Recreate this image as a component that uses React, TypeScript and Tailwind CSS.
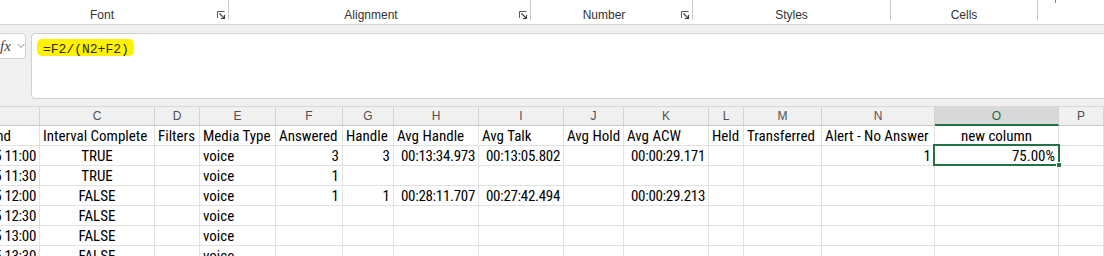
import React from "react";

const cellFont = "font-['Roboto_Condensed','Liberation_Sans_Narrow',Roboto,sans-serif]";

type Align = "l" | "r" | "c";
type Cell = { t?: string; a?: Align; n?: boolean };

const letters = ["B", "C", "D", "E", "F", "G", "H", "I", "J", "K", "L", "M", "N", "O", "P"];

const header: Cell[] = [
  { t: "Interval End", a: "r" },
  { t: "Interval Complete" },
  { t: "Filters" },
  { t: "Media Type" },
  { t: "Answered" },
  { t: "Handle" },
  { t: "Avg Handle" },
  { t: "Avg Talk" },
  { t: "Avg Hold" },
  { t: "Avg ACW" },
  { t: "Held" },
  { t: "Transferred" },
  { t: "Alert - No Answer" },
  { t: "new column", a: "c" },
  {},
];

function row(
  time: string,
  complete: string,
  answered = "",
  handle = "",
  avgH = "",
  avgT = "",
  acw = "",
  alert = "",
  pct = ""
): Cell[] {
  return [
    { t: "1/15/2025 " + time, a: "r", n: true },
    { t: complete, a: "c" },
    {},
    { t: "voice" },
    { t: answered, a: "r" },
    { t: handle, a: "r" },
    { t: avgH, a: "r", n: true },
    { t: avgT, a: "r", n: true },
    {},
    { t: acw, a: "r", n: true },
    {},
    {},
    { t: alert, a: "r" },
    { t: pct, a: "r" },
    {},
  ];
}

const rows: Cell[][] = [
  row("11:00", "TRUE", "3", "3", "00:13:34.973", "00:13:05.802", "00:00:29.171", "1", "75.00%"),
  row("11:30", "TRUE", "1"),
  row("12:00", "FALSE", "1", "1", "00:28:11.707", "00:27:42.494", "00:00:29.213"),
  row("12:30", "FALSE"),
  row("13:00", "FALSE"),
  row("13:30", "FALSE"),
];

const gridCols =
  "grid grid-cols-[40px_115px_45px_76px_67px_51px_85px_85px_60px_85px_35px_78px_113px_124px_1fr]";

function Launcher() {
  return (
    <svg width="9" height="8" viewBox="0 0 9 8" className="shrink-0">
      <path d="M0.5 7 V0.5 H7.5" fill="none" stroke="#5c5c5c" strokeWidth="1" />
      <path d="M2.5 2.5 L7.5 7.5" fill="none" stroke="#3c3c3c" strokeWidth="1.1" />
      <path d="M4 7.5 H7.5 V4" fill="none" stroke="#3c3c3c" strokeWidth="1.1" />
    </svg>
  );
}

function alignCls(a?: Align) {
  if (a === "r") return "justify-end";
  if (a === "c") return "justify-center";
  return "justify-start";
}

export default function App() {
  return (
    <div className="relative w-[1104px] h-[256px] overflow-hidden bg-[#f0f0f0] font-['Liberation_Sans',Arial,sans-serif]">
      {/* Ribbon group labels */}
      <div className="relative flex h-[25px] bg-white border-b border-[#d6d6d6] text-[12px] text-[#333]">
        <div className="relative flex w-[229px] border-r border-[#c8c8c8] h-[20px]">
          <div className="w-[204px] pt-[7px] text-center leading-[16px]">Font</div>
          <div className="absolute left-[217px] top-[11px]">
            <Launcher />
          </div>
        </div>
        <div className="relative flex w-[302px] h-[20px] border-r border-[#c8c8c8]">
          <div className="w-[284px] pt-[7px] text-center leading-[16px]">Alignment</div>
          <div className="absolute left-[290px] top-[11px]">
            <Launcher />
          </div>
        </div>
        <div className="relative flex w-[162px] h-[20px] border-r border-[#c8c8c8]">
          <div className="w-[146px] pt-[7px] text-center leading-[16px]">Number</div>
          <div className="absolute left-[150px] top-[11px]">
            <Launcher />
          </div>
        </div>
        <div className="flex w-[198px] h-[20px] border-r border-[#c8c8c8]">
          <div className="w-full pt-[7px] text-center leading-[16px]">Styles</div>
        </div>
        <div className="flex w-[147px] h-[20px] border-r border-[#c8c8c8]">
          <div className="w-full pt-[7px] text-center leading-[16px]">Cells</div>
        </div>
        <div className="absolute left-[1055px] top-0 w-[1px] h-[3px] bg-[#b05ad0]" />
      </div>

      {/* Formula bar */}
      <div className="mt-[8px] flex">
        <div className="ml-[-10px] flex h-[26px] w-[36px] items-center rounded-[4px] border border-[#d0d0d0] bg-white">
          <span className="ml-[9px] font-['Liberation_Serif',serif] text-[15px] italic leading-none text-[#444]">
            fx
          </span>
          <svg width="8" height="6" viewBox="0 0 8 6" className="ml-[6px]">
            <path d="M0.5 1 L4 4.5 L7.5 1" fill="none" stroke="#8a8a8a" strokeWidth="1" />
          </svg>
        </div>
        <div className="ml-[5px] mr-[-10px] h-[66px] flex-1 rounded-l-[4px] border border-[#d0d0d0] bg-white">
          <span className="ml-[5px] mt-[1px] inline-block h-[17px] rounded-[5px] bg-[#fff200] pl-[6px] pr-[5px] font-['Liberation_Mono',monospace] text-[13px] leading-[17px] text-[#2b2b1a]">
            <span className="relative top-[2px]">=F2/(N2+F2)</span>
          </span>
        </div>
      </div>

      {/* Sheet */}
      <div className="mt-[7px] border-t border-[#d8d8d8]">
        <div className={gridCols + " bg-[#f0f0f0]"}>
          {letters.map((l) => {
            const sel = l === "O";
            return (
              <div
                key={l}
                className={
                  "flex h-[19px] items-center justify-center border-r border-[#d2d2d2] text-[12px] leading-none " +
                  (sel
                    ? "bg-[#d9d9d9] text-[#1e6b3e] border-b-2 border-b-[#217346]"
                    : "text-[#505050] border-b border-b-[#c8c8c8]")
                }
              >
                {l === "B" ? "" : l}
              </div>
            );
          })}
        </div>
        <div className={gridCols + " bg-white text-[15px] text-black " + cellFont}>
          {[header, ...rows].map((r, ri) =>
            r.map((c, ci) => (
              <div
                key={ri + "-" + ci}
                className={
                  "flex h-[20px] overflow-hidden whitespace-nowrap border-b border-r border-[#e1e1e1] px-[3px] leading-[20px] " +
                  alignCls(c.a) +
                  (c.n ? " tracking-[-0.3px]" : "") +
                  (ri === 0 && ci === 0 ? " pr-[28px]" : "")
                }
              >
                {ri === 0 && ci === 0 ? "End" : c.t}
              </div>
            ))
          )}
        </div>
      </div>

      {/* Selection overlay */}
      <div className="absolute left-[933px] top-[144px] h-[22px] w-[127px] border-2 border-[#217346]" />
      <div className="absolute left-[1056px] top-[162px] h-[6px] w-[6px] border border-white bg-[#217346]" />
    </div>
  );
}
